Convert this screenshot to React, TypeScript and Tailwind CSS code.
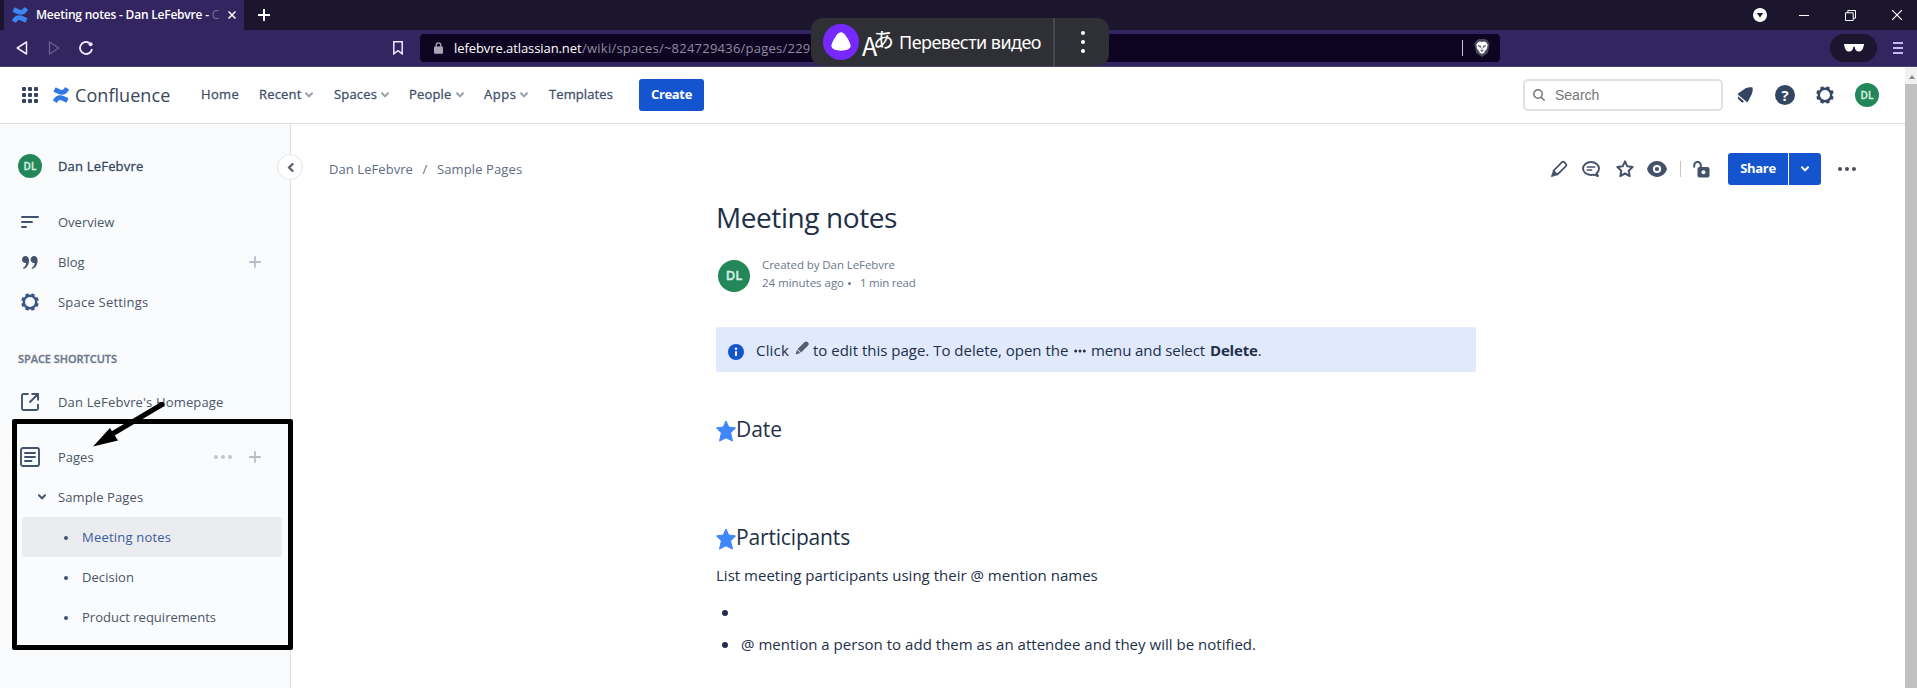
import React from "react";
import { SiConfluence } from "react-icons/si";

function Chevron({ className }: { className: string }) {
  return (
    <svg viewBox="0 0 8 6" className={className} fill="none" stroke="currentColor" strokeWidth="2" strokeLinecap="round" strokeLinejoin="round">
      <path d="M1 1.2 4 4.4 7 1.2" />
    </svg>
  );
}

function Gear({ className }: { className: string }) {
  return (
    <svg viewBox="0 0 18 18" className={className} fill="none" stroke="currentColor">
      <circle cx="9" cy="9" r="6.2" strokeWidth="2.4" />
      <g strokeWidth="3.4">
        <path d="M9 .2v2.600M9 15.200v2.600M.2 9h2.600M15.200 9h2.600" transform="rotate(22.500 9 9)" />
        <path d="M9 .2v2.600M9 15.200v2.600M.2 9h2.600M15.200 9h2.600" transform="rotate(67.500 9 9)" />
      </g>
    </svg>
  );
}

function Plus({ className }: { className: string }) {
  return (
    <svg viewBox="0 0 12 12" className={className} stroke="currentColor" strokeWidth="1.8" strokeLinecap="round">
      <path d="M6 .9v10.2M.9 6h10.2" />
    </svg>
  );
}

function Dots({ className }: { className: string }) {
  return (
    <svg viewBox="0 0 18 4" className={className} fill="currentColor">
      <circle cx="2" cy="2" r="2" />
      <circle cx="9" cy="2" r="2" />
      <circle cx="16" cy="2" r="2" />
    </svg>
  );
}

function Avatar({ className }: { className: string }) {
  return (
    <div className={`flex shrink-0 items-center justify-center rounded-full bg-[#23875a] font-semibold text-[#d5efe1] [-webkit-text-stroke:0.3px] ${className}`}>
      DL
    </div>
  );
}

function TabStrip() {
  return (
    <div className="flex h-[30px] bg-[#1b162d] pl-1 text-white">
      <div className="flex w-[240px] items-center bg-[#33255f] pl-2">
        <SiConfluence className="h-4 w-4 text-[#3b86f0]" />
        <span className="ml-2 flex w-[185px] whitespace-nowrap text-[12px] font-semibold tracking-[-0.210px]">
          Meeting notes - Dan LeFebvre -
          <span className="ml-[3px] w-[7px] overflow-hidden font-normal text-white/35">C</span>
        </span>
        <svg viewBox="0 0 8 8" className="ml-[7px] h-2 w-2" stroke="currentColor" strokeWidth="1.5">
          <path d="m.5.5 7 7m0-7-7 7" />
        </svg>
      </div>
      <svg viewBox="0 0 12 12" className="ml-[14px] mt-[9px] h-3 w-3" stroke="currentColor" strokeWidth="2">
        <path d="M6 0v12M0 6h12" />
      </svg>
      <div className="ml-auto flex items-center">
        <svg viewBox="0 0 14 14" className="h-[14px] w-[14px]">
          <circle cx="7" cy="7" r="7" fill="#fff" />
          <path d="M3.8 5h6.4L7 9.4z" fill="#1b162d" />
        </svg>
        <div className="ml-8 h-px w-[10px] bg-white" />
        <svg viewBox="0 0 11 11" className="ml-9 h-[11px] w-[11px]" fill="none" stroke="currentColor">
          <path d="M.5 2.8h7.7v7.7H.5zM2.8 2.8V.5h7.7v7.7H8.2" />
        </svg>
        <svg viewBox="0 0 10 10" className="ml-9 mr-[15px] h-[10px] w-[10px]" stroke="currentColor" strokeWidth="1.2">
          <path d="m0 0 10 10M10 0 0 10" />
        </svg>
      </div>
    </div>
  );
}

function AddressRow() {
  return (
    <div className="flex h-[37px] items-center border-b border-[#4c4078] bg-[#33255f] text-[#efeaff]">
      <svg viewBox="0 0 12 14" className="ml-4 h-[14px] w-3" fill="none" stroke="currentColor" strokeWidth="1.5" strokeLinejoin="round">
        <path d="M10.500 1v12L1.200 7z" />
      </svg>
      <svg viewBox="0 0 12 14" className="ml-5 h-[14px] w-3 text-[#6e6294]" fill="none" stroke="currentColor" strokeWidth="1.3" strokeLinejoin="round">
        <path d="M1.500 1v12l9.300-6z" />
      </svg>
      <svg viewBox="0 0 14 14" className="ml-[19px] h-[14px] w-[14px]" fill="none" stroke="currentColor" strokeWidth="1.8">
        <path d="M10.400 2A6 6 0 1 0 13 8" />
        <circle cx="11.600" cy="3.200" r="2" fill="currentColor" stroke="none" />
      </svg>
      <svg viewBox="0 0 10 14" className="ml-[300px] h-[14px] w-[10px]" fill="none" stroke="currentColor" strokeWidth="1.5">
        <path d="M.8.8h8.400v12L5 9.600.8 12.800z" />
      </svg>
      <div className="ml-[17px] flex h-7 w-[1080px] items-center rounded bg-[#0d0522] pl-[14px]">
        <svg viewBox="0 0 9 12" className="h-3 w-[9px] text-[#a9a5b5]">
          <path d="M2.200 6V3.200a2.300 2.300 0 0 1 4.600 0V6" fill="none" stroke="currentColor" strokeWidth="1.3" />
          <rect y="4.600" width="9" height="7.200" rx="1" fill="currentColor" />
        </svg>
        <span className="ml-[11px] mt-px w-[128px] whitespace-nowrap text-[13px] tracking-[-0.080px] text-white">lefebvre.atlassian.net</span>
        <span className="mt-px whitespace-nowrap text-[13px] tracking-[0.234px] text-[#8f8b9e]">/wiki/spaces/~824729436/pages/229</span>
        <div className="ml-auto h-4 w-px bg-[#c9c5d8]" />
        <svg viewBox="0 0 16 18" className="ml-[11px] mr-[10px] h-[18px] w-4">
          <path d="M3 1.200 5 0h6l2 1.200L15.700 4.500 13.800 14 8 18l-5.800-4L.3 4.500z" fill="#4b4a5c" />
          <path d="M4 3.200 6 2.600l2 .5 2-.5 2 .6 1.700 2.300-.8 4.300-1.900 2.200-.6 1.500L8 15l-2.400-1.500L5 12l-1.900-2.200-.8-4.300z" fill="#fff" />
          <path d="m4.200 6.600 2.600.7-.4 1.200zM11.800 6.600l-2.600.7.4 1.200zM8 8.500v2.200M6.400 11.200 8 12.300l1.600-1.100" fill="#4b4a5c" stroke="#4b4a5c" strokeWidth=".7" />
        </svg>
      </div>
      <div className="ml-auto flex h-7 w-[47px] items-center justify-center rounded-full bg-[#1b162d]">
        <svg viewBox="0 0 20 8" className="h-2 w-5" fill="#fff">
          <path d="M0 0h20v1.800h-.5C19.200 5 17.800 7.600 15 7.600c-2.800 0-4-2-4.300-4.800H9.300C9 5.600 7.800 7.600 5 7.600 2.200 7.600.8 5 .5 1.800H0z" />
        </svg>
      </div>
      <div className="ml-4 mr-[14px] flex w-[10px] flex-col gap-[3px] text-[#c6b6f2]">
        <div className="h-[2px] bg-current" />
        <div className="h-[2px] bg-current" />
        <div className="h-[2px] bg-current" />
      </div>
    </div>
  );
}

function NavItem({ label, className, menu = true }: { label: string; className: string; menu?: boolean }) {
  return (
    <div className={`flex items-center gap-[4px] text-[13px] font-medium text-[#42506a] [-webkit-text-stroke:0.3px] ${className}`}>
      {label}
      {menu && <Chevron className="h-[6px] w-2 text-[#9aa1ad]" />}
    </div>
  );
}

function ProductHeader() {
  return (
    <header className="flex h-14 shrink-0 items-center bg-white">
      <div className="ml-[22px] grid grid-cols-[4px_4px_4px] gap-[2px]">
        {[0, 1, 2, 3, 4, 5, 6, 7, 8].map((i) => (
          <div key={i} className="h-1 w-1 rounded-[1px] bg-[#344563]" />
        ))}
      </div>
      <SiConfluence className="ml-[15px] h-4 w-4 text-[#2f78e6]" />
      <span className="ml-[6px] w-[126px] text-[18px] leading-5 tracking-[0.060px] text-[#3a465c]">Confluence</span>
      <NavItem label="Home" menu={false} className="w-[58px] tracking-[0.313px]" />
      <NavItem label="Recent" className="w-[75px] tracking-[0.170px]" />
      <NavItem label="Spaces" className="w-[75px] tracking-[0.160px]" />
      <NavItem label="People" className="w-[75px] tracking-[0.170px]" />
      <NavItem label="Apps" className="w-[65px] tracking-[0.500px]" />
      <NavItem label="Templates" menu={false} className="w-[90px] tracking-[0.100px]" />
      <button className="flex h-8 w-[65px] items-center justify-center rounded-[3px] bg-[#1455cf] text-[13px] font-bold tracking-[-0.340px] text-white">
        Create
      </button>
      <div className="ml-auto flex h-8 w-[200px] items-center rounded-[5px] border-2 border-[#dfe1e6] pl-2">
        <svg viewBox="0 0 12 12" className="h-3 w-3 text-[#6b6f78]" fill="none" stroke="currentColor" strokeWidth="1.400" strokeLinecap="round">
          <circle cx="5" cy="5" r="4.200" />
          <path d="m8.200 8.200 3 3" />
        </svg>
        <span className="ml-[10px] font-['Liberation_Sans',sans-serif] text-[14px] text-[#757575]">Search</span>
      </div>
      <svg viewBox="0 0 16 16" className="ml-[14px] h-4 w-4 text-[#344563]" fill="currentColor">
        <path d="M8.600 1.200c2-.9 4.500-1.200 6.300-.9.500 0 .7.300.7.700.4 2-.1 4.400-1 6.400L10.800 14.800c-.3.500-.7.500-1 .2L.9 7.500c-.4-.3-.3-.7.100-1z" />
        <path d="M1.400 9.400 7 14.500c-.9 1.200-2.200 1.200-3 .5l-.4-1.100-1.100-.2-.2-1.100-1-.300C.7 11.400.8 10 1.400 9.400z" />
      </svg>
      <div className="ml-[22px] flex h-5 w-5 items-center justify-center rounded-full bg-[#344563] text-[15px] font-bold leading-5 text-white">?</div>
      <Gear className="ml-[21px] h-[18px] w-[18px] text-[#344563]" />
      <Avatar className="ml-[21px] mr-[26px] h-6 w-6 text-[10px]" />
    </header>
  );
}

const rowText = "mt-px text-[13px] text-[#4a5568]";

function PageLink({ label, className, active = false }: { label: string; className: string; active?: boolean }) {
  return (
    <div className={`ml-[22px] mr-2 flex h-10 items-center rounded-[3px] pl-[42px] ${active ? "bg-[#ebecf0]" : ""}`}>
      <div className="mt-px h-1 w-1 rounded-full bg-[#42526e]" />
      <span className={`ml-[14px] mt-[2px] text-[13px] ${active ? "text-[#3a5a9c]" : "text-[#4a5568]"} ${className}`}>{label}</span>
    </div>
  );
}

function Sidebar() {
  return (
    <aside className="relative flex w-[291px] shrink-0 flex-col border-r border-[#e0e1e5] bg-[#fafbfc] pt-[22px]">
      <div className="flex h-10 items-center pl-[18px]">
        <Avatar className="h-6 w-6 text-[10px]" />
        <span className="ml-4 mt-[2px] text-[13px] font-medium tracking-[0.190px] text-[#344563] [-webkit-text-stroke:0.3px]">Dan LeFebvre</span>
      </div>
      <div className="mt-4 flex h-10 items-center pl-[21px]">
        <svg viewBox="0 0 18 12" className="h-3 w-[18px] text-[#42526e]" stroke="currentColor" strokeWidth="2" strokeLinecap="round">
          <path d="M1 1h16M1 6h10M1 11h4" />
        </svg>
        <span className={`ml-[19px] ${rowText}`}>Overview</span>
      </div>
      <div className="flex h-10 items-center pl-[22px] pr-[29px]">
        <svg viewBox="0 0 16 13" className="mt-px h-[13px] w-4 text-[#42526e]" fill="currentColor">
          <path d="M3.400 0C5.600 0 7 1.700 7 4.200c0 4.200-2 7.500-5 8.600-.8.300-1.300-.600-.6-1.100C3 10.500 3.900 9 4.100 7 1.700 7.400 0 5.800 0 3.600 0 1.500 1.500 0 3.400 0z" />
          <path d="M12 0c2.200 0 3.600 1.700 3.600 4.200 0 4.200-2 7.500-5 8.600-.8.300-1.300-.600-.6-1.100 1.600-1.200 2.500-2.700 2.700-4.700-2.400.4-4.100-1.200-4.100-3.400C8.600 1.500 10.100 0 12 0z" />
        </svg>
        <span className={`ml-5 ${rowText}`}>Blog</span>
        <Plus className="ml-auto h-3 w-3 text-[#b9bdc6]" />
      </div>
      <div className="flex h-10 items-center pl-[21px]">
        <Gear className="h-[18px] w-[18px] text-[#3a5585]" />
        <span className={`ml-[19px] tracking-[0.220px] ${rowText}`}>Space Settings</span>
      </div>
      <div className="mt-[14px] flex h-[46px] items-center pl-[18px] text-[11px] font-semibold tracking-[-0.045px] text-[#6b778c] [-webkit-text-stroke:0.3px]">
        SPACE SHORTCUTS
      </div>
      <div className="flex h-10 items-center pl-[21px]">
        <svg viewBox="0 0 18 18" className="h-[18px] w-[18px] text-[#42526e]" fill="none" stroke="currentColor" strokeWidth="1.900">
          <path d="M7.500 1H2.500A1.500 1.500 0 0 0 1 2.500v13A1.500 1.500 0 0 0 2.500 17h13a1.500 1.500 0 0 0 1.500-1.500V11M10.500 1H17v6.500M17 1 8.500 9.500" />
        </svg>
        <span className={`ml-[19px] tracking-[0.160px] ${rowText}`}>Dan LeFebvre's Homepage</span>
      </div>
      <div className="mt-[15px] flex h-10 items-center pl-5 pr-[29px]">
        <svg viewBox="0 0 20 20" className="h-5 w-5 text-[#42526e]" fill="none" stroke="currentColor" strokeWidth="1.900" strokeLinecap="round">
          <rect x="1" y="1" width="18" height="18" rx="2" />
          <path d="M5 6h10M5 10h10M5 14h6.500" />
        </svg>
        <span className={`ml-[18px] ${rowText}`}>Pages</span>
        <Dots className="ml-auto h-1 w-[18px] text-[#c1c4cb]" />
        <Plus className="ml-[17px] h-3 w-3 text-[#b9bdc6]" />
      </div>
      <div className="flex h-10 items-center pl-[38px]">
        <Chevron className="h-[6px] w-2 text-[#42526e]" />
        <span className={`ml-3 tracking-[0.110px] ${rowText}`}>Sample Pages</span>
      </div>
      <PageLink label="Meeting notes" active className="tracking-[0.210px]" />
      <PageLink label="Decision" className="tracking-[0.061px]" />
      <PageLink label="Product requirements" className="tracking-[0.015px]" />
      <button className="absolute left-[277px] top-[30px] flex h-[26px] w-[26px] items-center justify-center rounded-full border border-[#e3e5e9] bg-white">
        <Chevron className="h-[7px] w-[9px] rotate-90 text-[#5b6473]" />
      </button>
    </aside>
  );
}

function PageActions() {
  return (
    <div className="flex items-center text-[#44516b]">
      <svg viewBox="0 0 18 18" className="h-[18px] w-[18px]" fill="none" stroke="currentColor" strokeWidth="1.700" strokeLinejoin="round">
        <path d="M3.400 10.800 12 2.200a1.600 1.600 0 0 1 2.300 0l1.600 1.600a1.600 1.600 0 0 1 0 2.300L7.300 14.700z" />
        <path d="m3.200 11.500 3.400 3.400L1.300 16.700z" fill="currentColor" strokeWidth=".8" />
      </svg>
      <svg viewBox="0 0 18 16" className="ml-[14px] h-4 w-[18px]" fill="none" stroke="currentColor" strokeWidth="1.900" strokeLinecap="round">
        <path d="M14.500 12.200C16.100 11 17 9.400 17 7.500 17 3.900 13.400 1 9 1S1 3.900 1 7.500 4.600 14 9 14c1 0 2-.1 2.800-.4L16 15z" strokeLinejoin="round" />
        <path d="M5.500 6h7M5.500 9h4" strokeWidth="1.700" />
      </svg>
      <svg viewBox="0 0 18 18" className="ml-4 h-[18px] w-[18px]" fill="none" stroke="currentColor" strokeWidth="2" strokeLinejoin="round">
        <path d="m9 1.400 2.300 4.900 5.300.7-3.900 3.700 1 5.400L9 13.500l-4.700 2.600 1-5.400L1.400 7l5.300-.7z" />
      </svg>
      <svg viewBox="0 0 20 16" className="ml-[13px] h-4 w-5">
        <path d="M10 0c5 0 8.400 3.600 9.700 6.900.3.800.3 1.400 0 2.200C18.400 12.400 15 16 10 16S1.600 12.400.3 9.100C0 8.300 0 7.700.3 6.900 1.600 3.600 5 0 10 0z" fill="currentColor" />
        <circle cx="10" cy="8" r="3.100" fill="none" stroke="#fff" strokeWidth="2" />
      </svg>
      <div className="ml-[13px] h-4 w-px bg-[#c3c6ce]" />
      <svg viewBox="0 0 17 17" className="ml-3 h-[17px] w-[17px]">
        <path d="M1.200 5.800V4.200a3.300 3.300 0 0 1 6.600 0v3" fill="none" stroke="currentColor" strokeWidth="2" strokeLinecap="round" />
        <rect x="4.500" y="6" width="12" height="10.500" rx="2" fill="currentColor" />
        <circle cx="10.500" cy="11.200" r="2" fill="#fff" />
      </svg>
      <button className="ml-[18px] flex h-8 w-[60px] items-center justify-center rounded-l-[3px] bg-[#1455cf] text-[13px] font-bold tracking-[-0.328px] text-white">
        Share
      </button>
      <button className="ml-px flex h-8 w-8 items-center justify-center rounded-r-[3px] bg-[#1455cf] text-white">
        <Chevron className="h-[6px] w-2" />
      </button>
      <Dots className="ml-[17px] h-1 w-[18px] text-[#4a4d55]" />
    </div>
  );
}

function StarHeading({ label, className }: { label: string; className: string }) {
  return (
    <h2 className="flex h-7 items-center">
      <svg viewBox="0 0 20 22" className="mt-[3px] h-[22px] w-5" fill="#3f86f8" stroke="#3f86f8" strokeLinejoin="round">
        <path d="m10 1 2.700 6 6.800.9-4.900 5 1.900 8.200L10 17.800l-6.500 3.300 1.900-8.200-4.900-5L7.300 7z" />
      </svg>
      <span className={`text-[21px] leading-7 ${className}`}>{label}</span>
    </h2>
  );
}

function Content() {
  return (
    <main className="flex min-w-0 flex-1 flex-col bg-white pl-[38px] pt-[29px] text-[#222f49]">
      <div className="flex h-8 items-center justify-between pr-[49px]">
        <div className="mt-[2px] flex text-[13px] text-[#5e6c84]">
          <span className="tracking-[0.069px]">Dan LeFebvre</span>
          <span className="w-[24px] text-center">/</span>
          <span className="tracking-[0.110px]">Sample Pages</span>
        </div>
        <PageActions />
      </div>
      <article className="ml-[387px] flex w-[760px] flex-col">
        <h1 className="mt-3 h-[41px] text-[28px] leading-10 tracking-[-0.420px]">Meeting notes</h1>
        <div className="mt-[18px] flex h-9 items-center pl-[2px]">
          <Avatar className="mt-[3px] h-8 w-8 text-[13px]" />
          <div className="ml-3 text-[11.5px] leading-[18px] text-[#6b778c]">
            <div className="tracking-[-0.075px]">Created by Dan LeFebvre</div>
            <div className="flex items-center">
              <span className="w-[86px] tracking-[-0.027px]">24 minutes ago</span>
              <span className="h-[3px] w-[3px] rounded-full bg-[#6b778c]" />
              <span className="ml-[9px] tracking-[-0.225px]">1 min read</span>
            </div>
          </div>
        </div>
        <div className="mt-[35px] flex h-[45px] items-center rounded-[3px] bg-[#e0eafc] pl-3 text-[15px]">
          <svg viewBox="0 0 16 16" className="mt-[5px] h-4 w-4">
            <circle cx="8" cy="8" r="8" fill="#1455cf" />
            <circle cx="8" cy="4.700" r="1.200" fill="#fff" />
            <rect x="7" y="7" width="2" height="5.200" rx="1" fill="#fff" />
          </svg>
          <span className="ml-3 mt-[2px] w-[39px] tracking-[0.181px]">Click</span>
          <svg viewBox="0 0 14 14" className="mb-1 h-[14px] w-[14px]" fill="#55606f">
            <path d="m2.600 8 7-7a2.500 2.500 0 0 1 3.500 3.500l-7 7zM2 8.700l3.400 3.400L.5 13.600z" />
          </svg>
          <span className="ml-[4px] mt-[2px] w-[261px] whitespace-nowrap">to edit this page. To delete, open the</span>
          <svg viewBox="0 0 12 4" className="mt-[2px] h-1 w-3" fill="currentColor">
            <circle cx="1.700" cy="2" r="1.500" />
            <circle cx="6" cy="2" r="1.500" />
            <circle cx="10.300" cy="2" r="1.500" />
          </svg>
          <span className="ml-[5px] mt-[2px] w-[119px] whitespace-nowrap tracking-[-0.100px]">menu and select</span>
          <b className="mt-[2px] tracking-[-0.180px]">Delete</b>
          <span className="mt-[2px]">.</span>
        </div>
        <div className="mt-[43px]">
          <StarHeading label="Date" className="tracking-[-0.047px]" />
        </div>
        <div className="mt-[80px]">
          <StarHeading label="Participants" className="tracking-[-0.160px]" />
        </div>
        <p className="mt-3 text-[15px] leading-6 tracking-[0.010px]">List meeting participants using their @ mention names</p>
        <ul className="mt-[13px]">
          <li className="flex h-6 items-center pl-[6px]">
            <span className="mt-[2px] h-[6px] w-[6px] rounded-full bg-[#222f49]" />
          </li>
          <li className="mt-2 flex h-6 items-center pl-[6px]">
            <span className="mt-px h-[6px] w-[6px] rounded-full bg-[#222f49]" />
            <span className="ml-[13px] whitespace-nowrap text-[15px] tracking-[0.022px]">
              @ mention a person to add them as an attendee and they will be notified.
            </span>
          </li>
        </ul>
      </article>
    </main>
  );
}

function TranslateWidget() {
  return (
    <div className="absolute left-[811px] top-[18px] flex h-12 w-[298px] items-center rounded-xl bg-[#2f3035] text-white">
      <svg viewBox="0 0 36 36" className="ml-3 h-9 w-9">
        <circle cx="18" cy="18" r="18" fill="#7629ff" />
        <path d="M18 8.300c2.500 0 4.200 2.300 6.300 5.800 1.900 3.100 3.300 6 3.300 8 0 3.200-4.800 4.600-9.600 4.600s-9.600-1.400-9.600-4.600c0-2 1.400-4.900 3.300-8 2.100-3.500 3.800-5.800 6.300-5.800z" fill="#fff" />
      </svg>
      <div className="ml-[3px] flex w-[37px] font-['Noto_Sans_CJK_JP',sans-serif] leading-6">
        <span className="mt-[6px] w-[11px] text-[25px]">A</span>
        <span className="-mt-[3px] text-[21px] leading-7">あ</span>
      </div>
      <span className="w-[154px] whitespace-nowrap font-['Noto_Sans',sans-serif] text-[18px] tracking-[-0.534px]">Перевести видео</span>
      <div className="h-full w-[2px] bg-[#48494f]" />
      <svg viewBox="0 0 4 22" className="ml-[26px] h-[22px] w-1" fill="currentColor">
        <circle cx="2" cy="2" r="2" />
        <circle cx="2" cy="11" r="2" />
        <circle cx="2" cy="20" r="2" />
      </svg>
    </div>
  );
}

function Annotation() {
  return (
    <>
      <div className="absolute left-[12px] top-[419px] h-[231px] w-[281px] rounded-[2px] border-[5px] border-black" />
      <svg viewBox="0 0 74 46" className="absolute left-[91px] top-[401px] h-[46px] w-[74px]">
        <path d="M71 3.500 22 32.500" stroke="#000" strokeWidth="5" strokeLinecap="round" />
        <path d="m2 45.500 17-18.500 8 12.500z" />
      </svg>
    </>
  );
}

export default function App() {
  return (
    <div className="relative flex h-[688px] w-full flex-col overflow-hidden bg-white font-['Open_Sans',sans-serif]">
      <TabStrip />
      <AddressRow />
      <div className="flex min-h-0 flex-1">
        <div className="flex min-w-0 flex-1 flex-col">
          <ProductHeader />
          <div className="flex min-h-0 flex-1 border-t border-[#dcdde0]">
            <Sidebar />
            <Content />
          </div>
        </div>
        <div className="flex w-3 flex-col items-end bg-[#f1f1f1]">
          <svg viewBox="0 0 8 5" className="mb-[5px] mr-[1px] mt-[8px] h-[4px] w-2" fill="#8f8f8f">
            <path d="M4 0 8 5H0z" />
          </svg>
          <div className="w-3 flex-1 bg-[#c1c1c1]" />
        </div>
      </div>
      <TranslateWidget />
      <Annotation />
    </div>
  );
}
